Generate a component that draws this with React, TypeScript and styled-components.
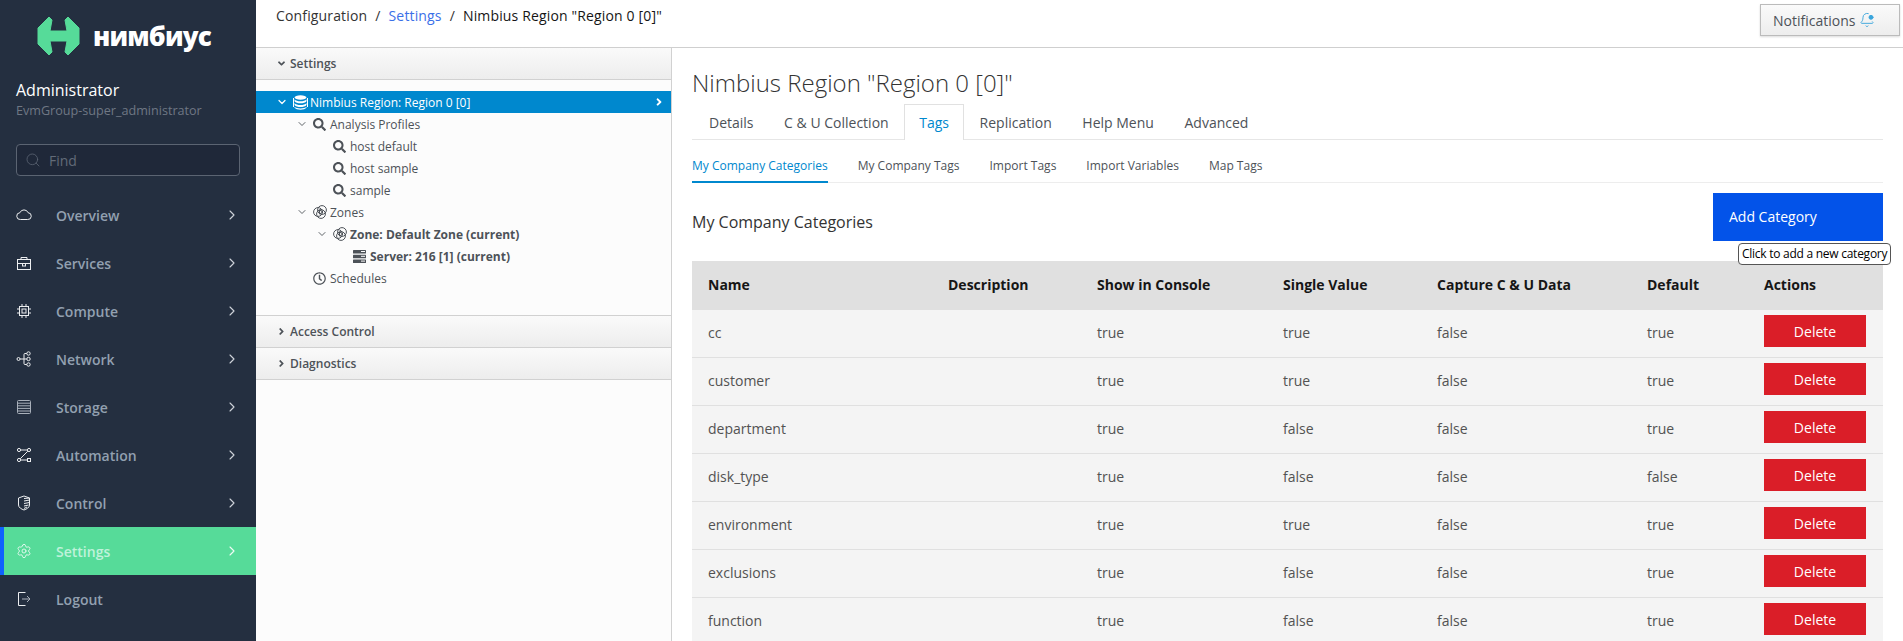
import React from 'react';
import styled, { createGlobalStyle } from 'styled-components';
import { BellDot, ChevronDown, ChevronRight, Search, Settings as Gear } from 'lucide-react';
import { FaAngleDown, FaAngleRight, FaRegClock, FaSearch } from 'react-icons/fa';

const GlobalStyle = createGlobalStyle`
  html, body {
    margin: 0;
    height: 100%;
    overflow: hidden;
    background: #fff;
    font-family: 'Open Sans', 'Liberation Sans', sans-serif;
  }
  #root {
    height: 100%;
  }
`;

const Page = styled.div`
  display: flex;
  height: 100vh;
`;

const Sidebar = styled.aside`
  width: 256px;
  flex: none;
  background: #242f40;
  display: flex;
  flex-direction: column;
`;

const LogoRow = styled.div`
  display: flex;
  align-items: center;
  gap: 13px;
  height: 40px;
  padding: 16px 0 0 37px;
`;

const LogoText = styled.span`
  color: #fff;
  font-size: 26px;
  font-weight: 800;
  letter-spacing: -0.8px;
  line-height: 40px;
`;

const UserBox = styled.div`
  padding: 23px 16px 0;
`;

const UserName = styled.div`
  color: #fff;
  font-size: 16px;
  line-height: 22px;
`;

const UserGroup = styled.div`
  color: #6f7784;
  font-size: 12.6px;
  line-height: 20px;
`;

const FindBox = styled.label`
  display: flex;
  align-items: center;
  height: 30px;
  margin: 23px 16px 15px;
  padding-left: 8px;
  gap: 8px;
  background: #1f2839;
  border: 1px solid #5b6472;
  border-radius: 4px;
  color: #5c6573;
`;

const FindInput = styled.input`
  flex: 1;
  min-width: 0;
  padding: 0;
  border: 0;
  outline: 0;
  background: none;
  font: 14px 'Open Sans', sans-serif;
  &::placeholder {
    color: #626b78;
  }
`;

const NavItem = styled.div<{ $active?: boolean }>`
  display: flex;
  align-items: center;
  height: 48px;
  flex: none;
  box-sizing: border-box;
  padding: 0 16px 0 12px;
  border-left: 4px solid ${(p) => (p.$active ? '#0f62fe' : 'transparent')};
  background: ${(p) => (p.$active ? '#56db99' : 'transparent')};
  color: ${(p) => (p.$active ? '#bff2da' : '#92a0b0')};
  font-size: 14px;
  font-weight: 600;
`;

const NavIcon = styled.svg<{ $dim?: boolean }>`
  width: 16px;
  height: 16px;
  flex: none;
  margin-right: 24px;
  fill: none;
  stroke: ${(p) => (p.$dim ? '#a9b0ba' : '#eceef0')};
  stroke-width: 1;
`;

const GearIcon = styled(Gear)`
  flex: none;
  margin-right: 24px;
  color: #eefaf4;
`;

const NavLabel = styled.span`
  flex: 1;
`;

const NavArrow = styled(ChevronRight)<{ $active?: boolean }>`
  color: ${(p) => (p.$active ? '#f2fbf6' : '#cfd4da')};
`;

const Main = styled.div`
  flex: 1;
  min-width: 0;
  display: flex;
  flex-direction: column;
`;

const TopBar = styled.header`
  flex: none;
  display: flex;
  justify-content: space-between;
  padding: 4px 3px 0 20px;
  height: 43px;
  border-bottom: 1px solid #cfcfcf;
`;

const Crumbs = styled.nav`
  display: flex;
  gap: 8px;
  font-size: 14px;
  letter-spacing: 0.15px;
  line-height: 24px;
  color: #333;
`;

const CrumbLink = styled.a`
  color: #3a70e8;
`;

const CrumbCurrent = styled.span`
  color: #151515;
`;

const NotifyButton = styled.button`
  display: flex;
  align-items: center;
  gap: 4px;
  width: 140px;
  height: 32px;
  padding: 0 0 0 12px;
  box-sizing: border-box;
  background: linear-gradient(#fafafa, #ededed);
  border: 1px solid #bbb;
  box-shadow: 0 1px 2px rgba(0, 0, 0, 0.15);
  color: #4d5258;
  font: 14px 'Open Sans', sans-serif;
`;

const BellIcon = styled(BellDot)`
  color: #39a5dc;
  circle {
    fill: #39a5dc;
  }
`;

const Body = styled.div`
  flex: 1;
  min-height: 0;
  display: flex;
`;

const TreePanel = styled.div`
  width: 415px;
  flex: none;
  background: #fcfcfc;
  border-right: 1px solid #d1d1d1;
`;

const PanelHead = styled.div`
  display: flex;
  align-items: center;
  height: 31px;
  padding-left: 20px;
  gap: 3px;
  background: linear-gradient(#fafafa, #ededed);
  border-bottom: 1px solid #d1d1d1;
  color: #4d5258;
  font-size: 12px;
  font-weight: 600;
`;

const Tree = styled.div`
  height: 198px;
  padding: 11px 0 26px;
  border-bottom: 1px solid #d1d1d1;
`;

const TreeRow = styled.div<{ $level: number; $selected?: boolean; $bold?: boolean }>`
  display: flex;
  align-items: center;
  height: 22px;
  padding-left: ${(p) => 20 + p.$level * 20}px;
  background: ${(p) => (p.$selected ? '#0088ce' : 'transparent')};
  color: ${(p) => (p.$selected ? '#fff' : '#4d5258')};
  font-size: 12px;
  font-weight: ${(p) => (p.$bold ? 700 : 400)};
`;

const TreeToggle = styled.span`
  width: 17px;
  flex: none;
  display: flex;
`;

const TreeIcon = styled.span`
  width: 17px;
  flex: none;
  display: flex;
  align-items: center;
`;

const TreeLabel = styled.span`
  flex: 1;
`;

const TreeEndArrow = styled.span`
  display: flex;
  padding-right: 6px;
`;

const Content = styled.main`
  flex: 1;
  min-width: 0;
  padding: 0 20px;
`;

const Title = styled.h1`
  margin: 18px 0 4px;
  font-size: 24px;
  font-weight: 300;
  line-height: 34px;
  color: #333;
`;

const Tabs = styled.div`
  display: flex;
  height: 35px;
  padding-left: 1.7px;
  border-bottom: 1px solid #e6e6e6;
`;

const Tab = styled.div<{ $active?: boolean }>`
  display: flex;
  align-items: center;
  height: ${(p) => (p.$active ? '36px' : '35px')};
  padding: 0 14.3px;
  box-sizing: border-box;
  background: #fff;
  border: 1px solid ${(p) => (p.$active ? '#e1e1e1' : 'transparent')};
  border-bottom: 0;
  color: ${(p) => (p.$active ? '#0088ce' : '#4d5258')};
  font-size: 14px;
`;

const SubTabs = styled.div`
  display: flex;
  gap: 30px;
  height: 42px;
  border-bottom: 1px solid #ededed;
`;

const SubTab = styled.div<{ $active?: boolean }>`
  display: flex;
  align-items: center;
  height: 43px;
  padding-top: 9px;
  box-sizing: border-box;
  border-bottom: 2px solid ${(p) => (p.$active ? '#0088ce' : 'transparent')};
  color: ${(p) => (p.$active ? '#0088ce' : '#4d5258')};
  font-size: 12px;
`;

const SectionHead = styled.div`
  display: flex;
  align-items: center;
  justify-content: space-between;
  padding: 10px 0 20px;
`;

const SectionTitle = styled.h2`
  margin: 10px 0 0;
  font-size: 16px;
  font-weight: 400;
  color: #333;
`;

const AddWrap = styled.div`
  position: relative;
`;

const AddButton = styled.button`
  display: block;
  width: 170px;
  height: 48px;
  padding: 0 16px 2px;
  border: 0;
  background: #0353e9;
  color: #fff;
  text-align: left;
  font: 14px 'Open Sans', sans-serif;
`;

const Tooltip = styled.div`
  position: absolute;
  z-index: 2;
  top: 50px;
  left: 25px;
  padding: 0 3px;
  background: #fff;
  border: 1px solid #555;
  border-radius: 4px;
  color: #000;
  font-size: 12px;
  letter-spacing: -0.26px;
  line-height: 20px;
  white-space: nowrap;
`;

const Table = styled.table`
  width: 100%;
  border-collapse: separate;
  border-spacing: 0;
  table-layout: fixed;
`;

const Th = styled.th`
  height: 48px;
  box-sizing: border-box;
  padding: 0 16px 2px;
  background: #e0e0e0;
  color: #161616;
  text-align: left;
  font-size: 14px;
  font-weight: 700;
`;

const Td = styled.td<{ $action?: boolean }>`
  height: 48px;
  box-sizing: border-box;
  padding: 0 16px ${(p) => (p.$action ? '5px' : '3px')};
  background: #f4f4f4;
  border-top: 1px solid #e0e0e0;
  color: #525252;
  font-size: 14px;
`;

const DeleteButton = styled.button`
  display: block;
  width: 102px;
  height: 32px;
  border: 0;
  background: #da1e28;
  color: #fff;
  font: 14px 'Open Sans', sans-serif;
`;

const RegionGlyph = () => (
  <svg width="15" height="15" viewBox="0 0 15 15" fill="currentColor">
    <ellipse cx="7.500" cy="2.500" rx="6" ry="2.200" />
    <path d="M1.500 4.300c1 1.500 3.500 2 6 2s5-.5 6-2V6.300c-1 1.500-3.500 2-6 2s-5-.5-6-2z" />
    <path d="M1.500 8c1 1.500 3.500 2 6 2s5-.5 6-2v2c-1 1.500-3.500 2-6 2s-5-.5-6-2z" />
    <path d="M1.500 11.700c1 1.300 3.500 1.700 6 1.700s5-.4 6-1.700v1.100c-1 1.300-3.500 1.900-6 1.900s-5-.6-6-1.900z" />
    <path d="M0 3v9h1V3zM14 3v9h1V3z" />
  </svg>
);

const ZoneGlyph = () => (
  <svg width="14" height="14" viewBox="0 0 14 14" fill="none" stroke="currentColor" strokeWidth="1">
    <circle cx="5" cy="7" r="4.400" />
    <circle cx="9" cy="5" r="4.400" />
    <circle cx="8" cy="9" r="4.400" />
    <path d="M6.500 5l3.500 2-3.500 2z" />
  </svg>
);

const ServerGlyph = () => (
  <svg width="13" height="13" viewBox="0 0 13 13" fill="currentColor">
    <rect x="0" y="0" width="13" height="3.400" rx="0.500" />
    <rect x="0" y="4.800" width="13" height="3.400" rx="0.500" />
    <rect x="0" y="9.600" width="13" height="3.400" rx="0.500" />
    <rect x="8" y="5.800" width="4" height="1" fill="#fcfcfc" />
    <rect x="8" y="1" width="4" height="1" fill="#fcfcfc" />
    <rect x="8" y="10.600" width="4" height="1" fill="#fcfcfc" />
  </svg>
);

const navItems = [
  {
    label: 'Overview',
    icon: <path d="M4.400 12.500a3.400 3.400 0 0 1-.5-6.800 4.400 4.400 0 0 1 8.200 0 3.400 3.400 0 0 1-.5 6.800z" />,
  },
  {
    label: 'Services',
    icon: (
      <>
        <rect x="1.500" y="4.500" width="13" height="10" />
        <path d="M5 4.500v-2h6v2M1.500 8.500h13" />
        <rect x="6.500" y="8.500" width="3" height="2.500" />
      </>
    ),
  },
  {
    label: 'Compute',
    icon: (
      <>
        <rect x="3.500" y="3.500" width="9" height="9" />
        <rect x="6" y="6" width="4" height="4" />
        <path d="M6 1v2.500M10 1v2.500M6 12.500V15M10 12.500V15M1 6h2.500M1 10h2.500M12.500 6H15M12.500 10H15" />
      </>
    ),
  },
  {
    label: 'Network',
    icon: (
      <>
        <circle cx="2.500" cy="8" r="1.500" />
        <circle cx="12.500" cy="2.500" r="1.700" />
        <circle cx="12.500" cy="8" r="1.700" />
        <circle cx="12.500" cy="13.500" r="1.700" />
        <path d="M4 8h6.800M8 8V3.500a1 1 0 0 1 1-1h1.800M8 8v4.500a1 1 0 0 0 1 1h1.800" />
      </>
    ),
  },
  {
    label: 'Storage',
    dim: true,
    icon: (
      <>
        <rect x="1.500" y="1.500" width="13" height="13" rx="1" />
        <path d="M1.500 4.200h13M1.500 6.800h13M1.500 9.400h13M1.500 12h13" />
      </>
    ),
  },
  {
    label: 'Automation',
    icon: (
      <>
        <circle cx="3" cy="3" r="1.600" />
        <circle cx="13" cy="3" r="1.600" />
        <circle cx="3" cy="13" r="1.600" />
        <rect x="11.500" y="11.500" width="3" height="3" />
        <path d="M4.600 3h6.800M11.800 4.200l-7.600 7.600M4.600 13h6.900" />
      </>
    ),
  },
  {
    label: 'Control',
    icon: (
      <>
        <path d="M8 1l5.500 2v7c0 2.500-3 4.200-5.500 5-2.500-.8-5.500-2.500-5.500-5V3z" />
        <path d="M8 3.500l5.500-.5M8 6l5.500-1M8 8.500l5.500-1M8 11l4.500-1M8 13.500l3-1.500" />
      </>
    ),
  },
];

const rows = [
  ['cc', 'true', 'true', 'false', 'true'],
  ['customer', 'true', 'true', 'false', 'true'],
  ['department', 'true', 'false', 'false', 'true'],
  ['disk_type', 'true', 'false', 'false', 'false'],
  ['environment', 'true', 'true', 'false', 'true'],
  ['exclusions', 'true', 'false', 'false', 'true'],
  ['function', 'true', 'false', 'false', 'true'],
];

const columnWidths = [240, 149, 186, 154, 210, 117, 135];

export default function App() {
  return (
    <Page>
      <GlobalStyle />
      <Sidebar>
        <LogoRow>
          <svg width="43" height="40" viewBox="0 0 43 40" fill="#56db99" stroke="#56db99" strokeLinejoin="round">
            <path d="M12 1L1 12v16l11 11 3-3-2-11h17l-2 11 3 3 11-11V12L31 1l-3 3 2 11H13l2-11z" />
          </svg>
          <LogoText>нимбиус</LogoText>
        </LogoRow>
        <UserBox>
          <UserName>Administrator</UserName>
          <UserGroup>EvmGroup-super_administrator</UserGroup>
        </UserBox>
        <FindBox>
          <Search size={16} strokeWidth={1.2} />
          <FindInput placeholder="Find" />
        </FindBox>
        {navItems.map((item) => (
          <NavItem key={item.label}>
            <NavIcon viewBox="0 0 16 16" $dim={item.dim}>
              {item.icon}
            </NavIcon>
            <NavLabel>{item.label}</NavLabel>
            <NavArrow size={16} strokeWidth={1.6} />
          </NavItem>
        ))}
        <NavItem $active>
          <GearIcon size={16} strokeWidth={1.3} />
          <NavLabel>Settings</NavLabel>
          <NavArrow size={16} strokeWidth={1.6} $active />
        </NavItem>
        <NavItem>
          <NavIcon viewBox="0 0 16 16">
            <path d="M9.500 1.500h-7v13h7" />
            <path d="M6 8h8M11 5l3 3-3 3" stroke="#a9b0ba" />
          </NavIcon>
          <NavLabel>Logout</NavLabel>
        </NavItem>
      </Sidebar>
      <Main>
        <TopBar>
          <Crumbs>
            <span>Configuration</span>
            <span>/</span>
            <CrumbLink>Settings</CrumbLink>
            <span>/</span>
            <CrumbCurrent>Nimbius Region "Region 0 [0]"</CrumbCurrent>
          </Crumbs>
          <NotifyButton>
            Notifications
            <BellIcon size={16} strokeWidth={1.4} />
          </NotifyButton>
        </TopBar>
        <Body>
          <TreePanel>
            <PanelHead>
              <FaAngleDown size={11} />
              Settings
            </PanelHead>
            <Tree>
              <TreeRow $level={0} $selected>
                <TreeToggle><ChevronDown size={12} strokeWidth={2.4} /></TreeToggle>
                <TreeIcon><RegionGlyph /></TreeIcon>
                <TreeLabel>Nimbius Region: Region 0 [0]</TreeLabel>
                <TreeEndArrow><FaAngleRight size={12} /></TreeEndArrow>
              </TreeRow>
              <TreeRow $level={1}>
                <TreeToggle><ChevronDown size={12} strokeWidth={1.8} /></TreeToggle>
                <TreeIcon><FaSearch size={13} /></TreeIcon>
                <TreeLabel>Analysis Profiles</TreeLabel>
              </TreeRow>
              {['host default', 'host sample', 'sample'].map((name) => (
                <TreeRow key={name} $level={2}>
                  <TreeToggle />
                  <TreeIcon><FaSearch size={13} /></TreeIcon>
                  <TreeLabel>{name}</TreeLabel>
                </TreeRow>
              ))}
              <TreeRow $level={1}>
                <TreeToggle><ChevronDown size={12} strokeWidth={1.8} /></TreeToggle>
                <TreeIcon><ZoneGlyph /></TreeIcon>
                <TreeLabel>Zones</TreeLabel>
              </TreeRow>
              <TreeRow $level={2} $bold>
                <TreeToggle><ChevronDown size={12} strokeWidth={1.8} /></TreeToggle>
                <TreeIcon><ZoneGlyph /></TreeIcon>
                <TreeLabel>Zone: Default Zone (current)</TreeLabel>
              </TreeRow>
              <TreeRow $level={3} $bold>
                <TreeToggle />
                <TreeIcon><ServerGlyph /></TreeIcon>
                <TreeLabel>Server: 216 [1] (current)</TreeLabel>
              </TreeRow>
              <TreeRow $level={1}>
                <TreeToggle />
                <TreeIcon><FaRegClock size={13} /></TreeIcon>
                <TreeLabel>Schedules</TreeLabel>
              </TreeRow>
            </Tree>
            <PanelHead>
              <FaAngleRight size={11} />
              Access Control
            </PanelHead>
            <PanelHead>
              <FaAngleRight size={11} />
              Diagnostics
            </PanelHead>
          </TreePanel>
          <Content>
            <Title>Nimbius Region "Region 0 [0]"</Title>
            <Tabs>
              <Tab>Details</Tab>
              <Tab>C &amp; U Collection</Tab>
              <Tab $active>Tags</Tab>
              <Tab>Replication</Tab>
              <Tab>Help Menu</Tab>
              <Tab>Advanced</Tab>
            </Tabs>
            <SubTabs>
              <SubTab $active>My Company Categories</SubTab>
              <SubTab>My Company Tags</SubTab>
              <SubTab>Import Tags</SubTab>
              <SubTab>Import Variables</SubTab>
              <SubTab>Map Tags</SubTab>
            </SubTabs>
            <SectionHead>
              <SectionTitle>My Company Categories</SectionTitle>
              <AddWrap>
                <AddButton>Add Category</AddButton>
                <Tooltip>Click to add a new category</Tooltip>
              </AddWrap>
            </SectionHead>
            <Table>
              <colgroup>
                {columnWidths.map((w, i) => (
                  <col key={i} width={w} />
                ))}
              </colgroup>
              <thead>
                <tr>
                  <Th>Name</Th>
                  <Th>Description</Th>
                  <Th>Show in Console</Th>
                  <Th>Single Value</Th>
                  <Th>Capture C &amp; U Data</Th>
                  <Th>Default</Th>
                  <Th>Actions</Th>
                </tr>
              </thead>
              <tbody>
                {rows.map((r) => (
                  <tr key={r[0]}>
                    <Td>{r[0]}</Td>
                    <Td />
                    <Td>{r[1]}</Td>
                    <Td>{r[2]}</Td>
                    <Td>{r[3]}</Td>
                    <Td>{r[4]}</Td>
                    <Td $action>
                      <DeleteButton>Delete</DeleteButton>
                    </Td>
                  </tr>
                ))}
              </tbody>
            </Table>
          </Content>
        </Body>
      </Main>
    </Page>
  );
}
